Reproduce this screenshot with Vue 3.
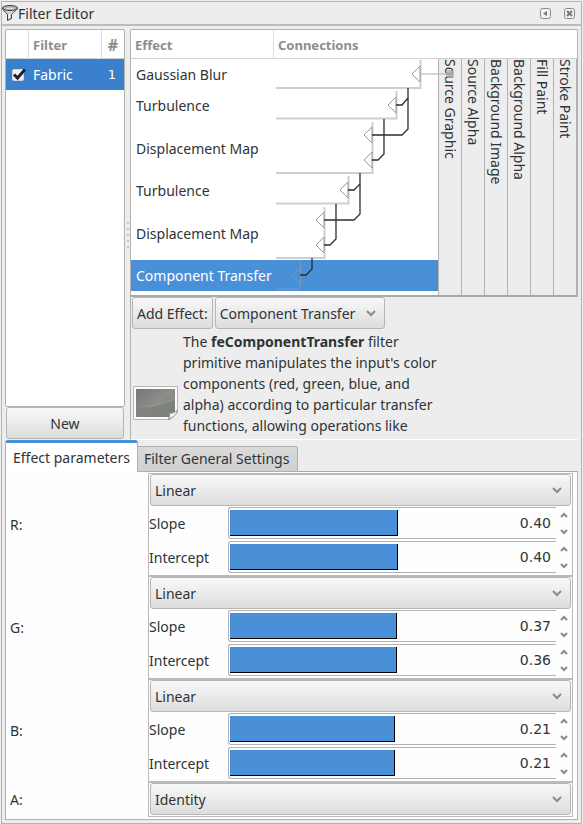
<script setup>
import { reactive, ref } from 'vue'

const effects = [
  { name: 'Gaussian Blur', inputs: 1 },
  { name: 'Turbulence', inputs: 1 },
  { name: 'Displacement Map', inputs: 2 },
  { name: 'Turbulence', inputs: 1 },
  { name: 'Displacement Map', inputs: 2 },
  { name: 'Component Transfer', inputs: 1 },
]
const selected = ref(5)
const sources = ['Source Graphic', 'Source Alpha', 'Background Image', 'Background Alpha', 'Fill Paint', 'Stroke Paint']

const edges = [
  'M276 88H420.500V60', 'M276 118.500H396.500V91', 'M276 173H372.500V122',
  'M276 203.500H348.500V176', 'M276 258H324.500V207',
]
const ports = [[420, 74], [396, 105], [372, 135], [372, 160], [348, 190], [324, 220], [324, 245]]
const wires = [
  'M408 88V98L402 105H396', 'M408 98V129L402 135H372', 'M384 119V154L378 160H372',
  'M360 173V184L354 190H348', 'M360 184V214L354 220H324', 'M336 204V239L330 245H324',
  'M312 258V269L306 275H300',
]

const channels = reactive([
  { id: 'R', type: 'Linear', rows: [{ label: 'Slope', value: '0.40', fill: 51.5 }, { label: 'Intercept', value: '0.40', fill: 51.5 }] },
  { id: 'G', type: 'Linear', rows: [{ label: 'Slope', value: '0.37', fill: 51.2 }, { label: 'Intercept', value: '0.36', fill: 51.2 }] },
  { id: 'B', type: 'Linear', rows: [{ label: 'Slope', value: '0.21', fill: 50.5 }, { label: 'Intercept', value: '0.21', fill: 50.5 }] },
  { id: 'A', type: 'Identity', rows: [] },
])
const types = ['Identity', 'Table', 'Discrete', 'Linear', 'Gamma']
const newEffect = ref('Component Transfer')
const enabled = ref(true)

function step(row, amount) {
  row.value = (Number(row.value) + amount).toFixed(2)
}
</script>

<template>
  <div class="dialog">
    <header class="titlebar">
      <svg class="funnel" width="16" height="16" viewBox="0 0 16 16" aria-hidden="true">
        <path d="M.500 3C.500 5 3 6.500 5.500 9.500V15.500L9.500 13.500V9.500C12 6.500 15.500 5 15.500 3Z" fill="#d2d4d1" stroke="#3c3f3e" />
        <ellipse cx="8" cy="3" rx="7.500" ry="2.500" fill="#b4b6b4" stroke="#3c3f3e" />
        <path d="M4 4C6 3 10 3 12 4" fill="none" stroke="#e5e5e5" />
        <path d="M7 9V13" stroke="#fff" />
      </svg>
      <h1>Filter Editor</h1>
      <button class="dock" aria-label="Iconify">
        <svg width="11" height="11" viewBox="0 0 11 11"><rect x=".5" y=".5" width="10" height="10" rx="2" /><path class="solid" d="M3 5.500L7 3V8Z" /></svg>
      </button>
      <button class="dock" aria-label="Close">
        <svg width="11" height="11" viewBox="0 0 11 11"><rect x=".5" y=".5" width="10" height="10" rx="2" /><path class="cross" d="M3 3L8 8M8 3L3 8" /></svg>
      </button>
    </header>

    <main>
      <section class="upper">
        <div class="filters">
          <div class="list">
            <table>
              <thead><tr><th class="tick"></th><th>Filter</th><th class="count">#</th></tr></thead>
              <tbody>
                <tr>
                  <td class="tick">
                    <label class="check">
                      <input v-model="enabled" type="checkbox" aria-label="Apply Fabric">
                      <svg v-if="enabled" width="16" height="14" viewBox="0 0 16 14"><path d="M3 6.500L6.500 10L14 1.500" /></svg>
                    </label>
                  </td>
                  <td>Fabric</td><td class="count">1</td>
                </tr>
              </tbody>
            </table>
          </div>
          <button class="btn new">New</button>
        </div>

        <div class="splitter"><i v-for="n in 5" :key="n"></i></div>

        <div class="effects">
          <table class="primitives">
            <thead><tr><th class="name">Effect</th><th>Connections</th></tr></thead>
            <tbody>
              <tr v-for="(effect, i) in effects" :key="i" :class="{ double: effect.inputs === 2, selected: i === selected }" @click="selected = i">
                <td class="name">{{ effect.name }}</td>
                <td v-if="i === 0" class="graph" :rowspan="effects.length">
                  <div class="canvas">
                    <svg class="wiring" width="164" height="236" viewBox="273 59 164 236">
                      <rect x="273" y="260" width="165" height="31" fill="#4a90d9" />
                      <path v-for="d in edges" :key="d" :d="d" class="edge" />
                      <path d="M276 289H300.500V261M300 268L292 275L300 283" class="edge muted" />
                      <path v-for="([x, y], n) in ports" :key="n" :d="`M${x} ${y - 8}L${x - 8} ${y}L${x} ${y + 8}Z`" class="port" />
                      <path v-for="d in wires" :key="d" :d="d" class="wire" />
                      <path d="M420 74H450" class="link" />
                      <circle cx="450" cy="74" r="4" fill="#a9abac" fill-opacity=".85" />
                    </svg>
                    <div v-for="source in sources" :key="source" class="source">{{ source }}</div>
                  </div>
                </td>
              </tr>
            </tbody>
          </table>

          <div class="adder">
            <div class="controls">
              <button class="btn">Add Effect:</button>
              <div class="combo">
                <select v-model="newEffect" aria-label="Effect">
                  <option>Component Transfer</option><option>Gaussian Blur</option><option>Turbulence</option><option>Displacement Map</option>
                </select>
                <svg class="chevron" width="12" height="8" viewBox="0 0 12 8"><path d="M2 2L6 6L10 2" /></svg>
              </div>
            </div>
            <div class="about">
              <svg class="preview" width="47" height="36" viewBox="0 0 47 36" aria-hidden="true">
                <defs><linearGradient id="sheet" x2="1" y2="1"><stop stop-color="#747773" /><stop offset=".5" stop-color="#8b8e89" /><stop offset="1" stop-color="#777a76" /></linearGradient></defs>
                <path d="M1.500 1.500H45.500V27L38 34.500H1.500Z" fill="#fbfbfb" stroke="#b5b5b5" />
                <path d="M4 4H43V27L37 32H4Z" fill="url(#sheet)" />
                <path d="M4 24C18 22 32 18 43 14V27L37 32H4Z" fill="#7b7e7a" opacity=".6" />
                <path d="M14 22C25 20 34 17 43 14" fill="none" stroke="#989b96" />
                <path d="M36 34.500C38 32 38 30 37 28C40 29 43 27 45.500 25C45 29 41 33 36 34.500Z" fill="#f4f4f4" stroke="#8f918e" />
              </svg>
              <p>The <b>feComponentTransfer</b> filter primitive manipulates the input's color components (red, green, blue, and alpha) according to particular transfer functions, allowing operations like</p>
            </div>
          </div>
        </div>
      </section>

      <section class="lower">
        <div class="tabs" role="tablist">
          <button role="tab" class="tab active" aria-selected="true">Effect parameters</button>
          <button role="tab" class="tab" aria-selected="false">Filter General Settings</button>
          <span class="rest"></span>
        </div>
        <div class="page" role="tabpanel">
          <div v-for="channel in channels" :key="channel.id" class="channel">
            <label class="letter" :for="'type-' + channel.id">{{ channel.id }}:</label>
            <div class="settings">
              <div class="combo">
                <select :id="'type-' + channel.id" v-model="channel.type">
                  <option v-for="t in types" :key="t">{{ t }}</option>
                </select>
                <svg class="chevron" width="12" height="8" viewBox="0 0 12 8"><path d="M2 2L6 6L10 2" /></svg>
              </div>
              <div v-for="row in channel.rows" :key="row.label" class="param">
                <label :for="channel.id + row.label">{{ row.label }}</label>
                <div class="entry">
                  <span class="track"><span class="fill" :style="{ width: row.fill + '%' }"></span></span>
                  <input :id="channel.id + row.label" v-model="row.value" type="text">
                </div>
                <div class="spin">
                  <button aria-label="Increase" @click="step(row, 0.01)"><svg width="8" height="6" viewBox="0 0 8 6"><path d="M1 5L4 2L7 5" /></svg></button>
                  <button aria-label="Decrease" @click="step(row, -0.01)"><svg width="8" height="6" viewBox="0 0 8 6"><path d="M1 1L4 4L7 1" /></svg></button>
                </div>
              </div>
            </div>
          </div>
        </div>
      </section>
    </main>
  </div>
</template>

<style>
body { background: #ededed; }
</style>

<style scoped>
.dialog, .dialog * { box-sizing: border-box; }
.dialog {
  margin: 1px;
  border: 1px solid #b4b4b4;
  background: #ededed;
  color: #2e3436;
  font: 14px/21px "Noto Sans", "Open Sans", sans-serif;
}
button, input, select { font: inherit; color: inherit; margin: 0; }
table { border-collapse: separate; border-spacing: 0; width: 100%; }
th, td { padding: 0; text-align: left; }

.titlebar { display: flex; align-items: center; height: 24px; border-bottom: 2px solid #bcbcbc; padding-right: 6px; }
.titlebar h1 { flex: 1; margin: 0; font-size: 14px; font-weight: 400; }
.dock { display: flex; border: 0; padding: 0; background: none; margin-left: 13px; }
.dock rect { fill: #f2f2f2; stroke: #8a8a8a; }
.dock .solid { fill: #777; }
.dock .cross { stroke: #777; stroke-width: 2; }

main { padding: 3px 3px 3px; }
.upper { display: grid; grid-template-columns: 120px 5px minmax(0, 1fr); }
.filters { display: flex; flex-direction: column; }
.list { flex: 1; border: 1px solid #b0b0b0; border-radius: 2px; background: #fff; }
th { height: 29px; padding: 2px 0 0 4px; font-size: 13px; color: #8c8e8d; border-bottom: 1px solid #d0d0d0; border-left: 1px solid #dcdcdc; }
th:first-child { border-left: 0; }
.list tbody tr { height: 31px; background: #3a80cd; color: #fff; }
.list td { padding-left: 5px; }
.list .tick { width: 22px; }
.list .count { width: 23px; text-align: center; padding-left: 0; }
.list th.count { font-size: 16px; }
.list td.count { font-family: "DejaVu Sans", sans-serif; font-size: 13px; padding-right: 1px; }
.check { display: grid; width: 16px; height: 14px; }
.check > * { grid-area: 1 / 1; }
.check input { appearance: none; width: 12px; height: 12px; margin: 1px; border: 1px solid #d5d5d5; border-radius: 2px; background: #f2f2f2; }
.check path { fill: none; stroke: #222; stroke-width: 3; }

.btn, select {
  border: 1px solid #b6b6b6;
  border-radius: 3px;
  background: linear-gradient(#f8f8f8, #ebebeb 50%, #dcdcdc);
  height: 32px;
  padding: 1px 4px 0;
}
.new { margin: 0 1px 1px; }
.splitter { display: flex; flex-direction: column; align-items: center; justify-content: center; gap: 4px; }
.splitter i { width: 2px; height: 2px; background: #c2c2c2; }

.primitives { border: 1px solid #b0b0b0; border-bottom: 2px solid #a8a8a8; border-radius: 2px 2px 0 0; background: #fff; }
.primitives .name { width: 142px; padding-left: 5px; }
.primitives th.name { padding-left: 4px; }
.primitives tbody tr { height: 31px; }
.primitives tbody tr.double { height: 54px; }
.primitives tbody tr:last-child { height: 35px; }
.primitives tbody tr:last-child .name { border-bottom: 4px solid #fff; }
.primitives .selected .name { background: #4a90d9; color: #fff; }
.primitives .graph { padding: 0; vertical-align: top; }
.canvas { display: flex; justify-content: flex-end; height: 236px; }
.wiring { flex: none; margin-right: auto; position: relative; z-index: 1; overflow: visible; pointer-events: none; }
.wiring path { fill: none; }
.wiring .edge { stroke-width: 2; stroke: #cfcfcf; }
.wiring .muted { stroke: #789ab9; stroke-width: 1; }
.wiring .port { fill: #fff; stroke: #999; }
.wire { stroke: #2a2d2e; stroke-width: 1.3; }
.link { stroke: #adb0b1; }
.source { writing-mode: vertical-rl; width: 23px; line-height: 22px; border-left: 1px solid #b2b2b2; background: #ededed; white-space: nowrap; }
.source:last-child { width: 24px; border-right: 1px solid #b2b2b2; }

.adder { height: 143px; border-left: 1px solid #b0b0b0; border-bottom: 1px solid #fff; padding: 0 1px; overflow: hidden; }
.controls { display: flex; gap: 2px; }
.combo { display: grid; align-items: center; }
.combo > * { grid-area: 1 / 1; }
.combo select { appearance: none; width: 100%; padding: 1px 28px 0 4px; }
.chevron { justify-self: end; margin-right: 8px; pointer-events: none; }
.chevron path, .spin path { fill: none; stroke: #888b8a; stroke-width: 2; }
.about { display: flex; align-items: center; gap: 4px; padding-top: 2px; }
.about p { margin: 0; max-width: 258px; }
.preview { flex: none; margin-top: 38px; }

.tabs { display: flex; align-items: flex-end; height: 32px; }
.tab { height: 26px; padding: 0 8px 2px 6px; border: 1px solid #b0b0b0; border-left: 0; border-radius: 0 3px 0 0; background: linear-gradient(#dadada, #d0d0d0); white-space: nowrap; }
.tab.active { height: 32px; padding: 0 7px; border: 1px solid #b0b0b0; border-top: 3px solid #4a90d9; border-bottom: 0; border-radius: 3px 3px 0 0; background: #fff; }
.rest { flex: 1; border-bottom: 1px solid #a8a8a8; }
.page { border: 1px solid #b0b0b0; border-top: 0; background: #fefefe; padding: 1px 4px 2px; }
.channel { display: grid; grid-template-columns: 138px minmax(0, 1fr); align-items: center; }
.settings { border: 1px solid #bababa; padding: 0 0 1px; }
.settings .combo { padding: 0 1px; }
.param { display: grid; grid-template-columns: 79px minmax(0, 1fr) 16px; align-items: center; height: 34px; }
.entry { display: grid; height: 32px; border: 1px solid #b2b2b2; border-right: 0; border-radius: 3px 0 0 3px; padding: 2px 0 2px 1px; }
.entry > * { grid-area: 1 / 1; min-width: 0; }
.fill { display: block; height: 26px; background: #4a90d9; border: solid #000; border-width: 0 1px 1px 0; }
.entry input { width: 100%; border: 0; padding: 0 5px; background: none; text-align: right; outline: 0; font-family: "DejaVu Sans", sans-serif; }
.spin { display: grid; gap: 11px; justify-items: center; }
.spin button { display: flex; border: 0; padding: 0; background: none; }
</style>
